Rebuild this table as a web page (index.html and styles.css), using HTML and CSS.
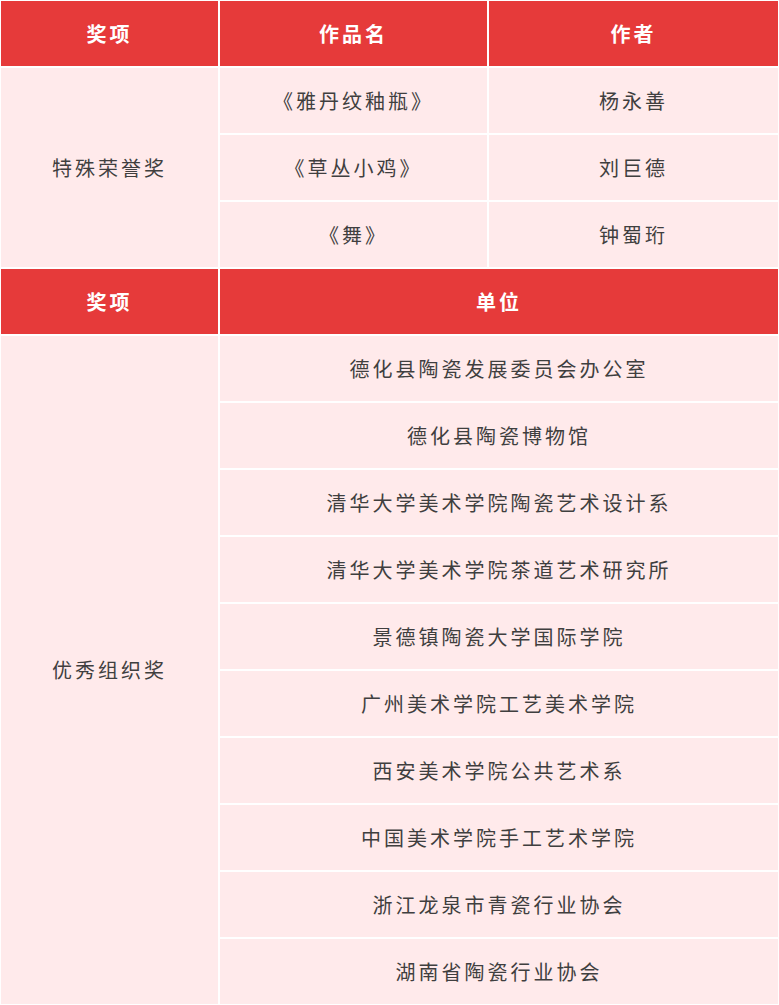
FILE: index.html
```html
<!DOCTYPE html>
<html lang="zh">
<head>
<meta charset="utf-8">
<link rel="stylesheet" href="styles.css">
</head>
<body>
<div class="table">
  <div class="cell head">奖项</div>
  <div class="cell head">作品名</div>
  <div class="cell head">作者</div>

  <div class="cell body span3">特殊荣誉奖</div>
  <div class="cell body">《雅丹纹釉瓶》</div>
  <div class="cell body">杨永善</div>
  <div class="cell body">《草丛小鸡》</div>
  <div class="cell body">刘巨德</div>
  <div class="cell body">《舞》</div>
  <div class="cell body">钟蜀珩</div>

  <div class="cell head">奖项</div>
  <div class="cell head wide">单位</div>

  <div class="cell body span10">优秀组织奖</div>
  <div class="cell body wide">德化县陶瓷发展委员会办公室</div>
  <div class="cell body wide">德化县陶瓷博物馆</div>
  <div class="cell body wide">清华大学美术学院陶瓷艺术设计系</div>
  <div class="cell body wide">清华大学美术学院茶道艺术研究所</div>
  <div class="cell body wide">景德镇陶瓷大学国际学院</div>
  <div class="cell body wide">广州美术学院工艺美术学院</div>
  <div class="cell body wide">西安美术学院公共艺术系</div>
  <div class="cell body wide">中国美术学院手工艺术学院</div>
  <div class="cell body wide">浙江龙泉市青瓷行业协会</div>
  <div class="cell body wide">湖南省陶瓷行业协会</div>
</div>
</body>
</html>
```
FILE: styles.css
```css
html, body {
  margin: 0;
  padding: 0;
  background: #ffffff;
}
body {
  font-family: "Noto Sans CJK SC", "Noto Sans", sans-serif;
}
.table {
  display: grid;
  grid-template-columns: 217px 267px 289px;
  grid-auto-rows: 65px;
  gap: 2px;
  padding: 1px;
  background: #ffffff;
  width: 777px;
}
.cell {
  display: flex;
  align-items: center;
  justify-content: center;
  font-size: 20px;
  letter-spacing: 3px;
  line-height: 1;
}
.head {
  background: #e63a3a;
  color: #ffffff;
  font-weight: bold;
}
.body {
  background: #ffeaeb;
  color: #3f3f3f;
}
.span3 {
  grid-row: span 3;
}
.span10 {
  grid-row: span 10;
}
.wide {
  grid-column: span 2;
}
```
